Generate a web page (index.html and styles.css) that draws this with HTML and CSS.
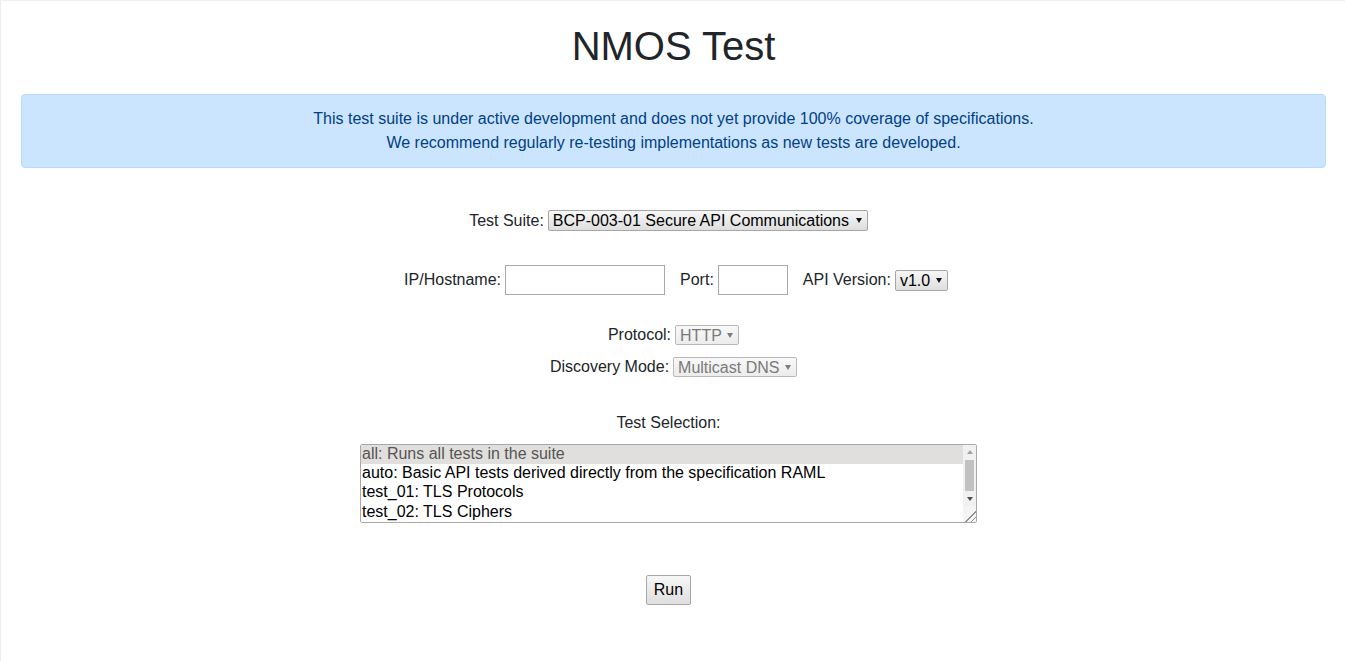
FILE: index.html
```html
<!DOCTYPE html>
<html lang="en">
<head>
<meta charset="utf-8">
<title>NMOS Test</title>
<link rel="stylesheet" href="styles.css">
</head>
<body>
<div class="page">
  <h1 class="title">NMOS Test</h1>
  <div class="alert">
    This test suite is under active development and does not yet provide 100% coverage of specifications.<br>
    We recommend regularly re-testing implementations as new tests are developed.
  </div>
  <form class="form">
    <div class="row row-suite">
      <label class="lbl" for="suite">Test Suite:</label>
      <span class="sel-wrap">
        <select id="suite" class="sel">
          <option>BCP-003-01 Secure API Communications</option>
        </select>
      </span>
    </div>
    <div class="row row-host">
      <label class="lbl" for="host">IP/Hostname:</label>
      <input id="host" class="txt txt-host" type="text">
      <label class="lbl grp" for="port">Port:</label>
      <input id="port" class="txt txt-port" type="text">
      <label class="lbl grp" for="ver">API Version:</label>
      <span class="sel-wrap">
        <select id="ver" class="sel">
          <option>v1.0</option>
        </select>
      </span>
    </div>
    <div class="row row-proto">
      <label class="lbl" for="proto">Protocol:</label>
      <span class="sel-wrap disabled">
        <select id="proto" class="sel" disabled>
          <option>HTTP</option>
        </select>
      </span>
    </div>
    <div class="row row-disc">
      <label class="lbl" for="disc">Discovery Mode:</label>
      <span class="sel-wrap disabled">
        <select id="disc" class="sel" disabled>
          <option>Multicast DNS</option>
        </select>
      </span>
    </div>
    <div class="row row-sel-label">
      <label class="lbl" for="tests">Test Selection:</label>
    </div>
    <div class="row row-list">
      <span class="list-wrap">
        <select id="tests" class="list" multiple size="4">
          <option selected>all: Runs all tests in the suite</option>
          <option>auto: Basic API tests derived directly from the specification RAML</option>
          <option>test_01: TLS Protocols</option>
          <option>test_02: TLS Ciphers</option>
          <option>test_03: HSTS Header</option>
        </select>
        <span class="vscroll" aria-hidden="true">
          <span class="sb-btn sb-up"></span>
          <span class="sb-track"><span class="sb-thumb"></span></span>
          <span class="sb-btn sb-down"></span>
          <span class="sb-corner"></span>
        </span>
      </span>
    </div>
    <div class="row row-run">
      <button type="button" class="btn">Run</button>
    </div>
  </form>
</div>
</body>
</html>
```
FILE: styles.css
```css
html, body {
  margin: 0;
  padding: 0;
  background: #fff;
}
body {
  font-family: "Liberation Sans", Arial, sans-serif;
  font-size: 16px;
  color: #212529;
}
.page {
  border-top: 1px solid #eeeeee;
  border-left: 1px solid #eeeeee;
  min-height: 661px;
  padding: 0 19px 0 20px;
  box-sizing: border-box;
}
.title {
  font-family: "Liberation Sans", Arial, sans-serif;
  font-weight: 400;
  font-size: 40px;
  line-height: 48px;
  text-align: center;
  margin: 21px 0 24px 0;
  color: #212529;
}
.alert {
  background: #cce5ff;
  border: 1px solid #b8daff;
  color: #004085;
  border-radius: 4px;
  padding: 12px 20px;
  line-height: 24px;
  text-align: center;
}
.form {
  margin: 0;
}
.row {
  display: flex;
  justify-content: center;
  align-items: center;
}
.lbl {
  margin-right: 4px;
  line-height: 18px;
}
.grp {
  margin-left: 15px;
}
.row-suite { margin-top: 42px; padding-right: 10px; }
.row-host { margin-top: 34px; padding-left: 5px; }
.row-proto { margin-top: 30px; }
.row-disc { margin-top: 12px; }
.row-sel-label { margin-top: 37px; padding-right: 10px; }
.row-sel-label .lbl { margin-right: 0; }
.row-list { margin-top: 12px; padding-right: 10px; }
.row-run { margin-top: 52px; padding-right: 10px; }

.sel-wrap {
  position: relative;
  display: inline-block;
}
.sel {
  -webkit-appearance: none;
  appearance: none;
  font-family: "Liberation Sans", Arial, sans-serif;
  font-size: 16px;
  color: #000;
  height: 21px;
  line-height: 19px;
  padding: 0 16px 0 4px;
  border: 1px solid #a6a6a6;
  border-radius: 2px;
  background: linear-gradient(#f7f7f7, #dedede);
  margin: 0;
  display: block;
  opacity: 1;
}
.sel-wrap::after {
  content: "";
  position: absolute;
  right: 6px;
  top: 8px;
  width: 0;
  height: 0;
  border-left: 3px solid transparent;
  border-right: 3px solid transparent;
  border-top: 5px solid #111;
  pointer-events: none;
}
.sel-wrap.disabled .sel {
  color: #7a7a7a;
  border-color: #b9b9b9;
  background: linear-gradient(#f8f8f8, #ececec);
  height: 20px;
  opacity: 1;
}
.sel-wrap.disabled::after {
  border-top-color: #7a7a7a;
  top: 8px;
}
.txt {
  box-sizing: border-box;
  height: 30px;
  border: 1px solid #a9a9a9;
  margin: 0;
  padding: 2px 4px;
  font-family: "Liberation Sans", Arial, sans-serif;
  font-size: 16px;
  background: #fff;
}
.txt-host { width: 160px; }
.txt-port { width: 70px; }

.list-wrap {
  position: relative;
  display: inline-block;
}
.list {
  box-sizing: border-box;
  display: block;
  width: 617px;
  height: 79px;
  border: 1px solid #a9a9a9;
  font-family: "Liberation Sans", Arial, sans-serif;
  font-size: 16px;
  line-height: 19px;
  color: #000;
  margin: 0;
  padding: 0;
  resize: both;
  background: #fff;
}
.list option {
  padding: 0 2px 0 1px;
  line-height: 19px;
  height: 19px;
}
.list option:checked {
  background: #e0dfdd;
  color: #555;
  margin-right: 13px;
}
.vscroll {
  position: absolute;
  top: 1px;
  right: 1px;
  bottom: 1px;
  width: 13px;
  background: #f1f1f1;
  display: flex;
  flex-direction: column;
  pointer-events: none;
}
.sb-btn {
  height: 14px;
  flex: none;
  display: flex;
  align-items: center;
  justify-content: center;
}
.sb-up::before {
  content: "";
  border-left: 3px solid transparent;
  border-right: 3px solid transparent;
  border-bottom: 4px solid #a3a3a3;
}
.sb-down::before {
  content: "";
  border-left: 3px solid transparent;
  border-right: 3px solid transparent;
  border-top: 4px solid #505050;
}
.sb-track {
  flex: 1;
  padding: 1px 2px;
  display: flex;
}
.sb-thumb {
  flex: 1;
  background: #c1c1c1;
}
.sb-corner {
  height: 16px;
  flex: none;
  background:
    linear-gradient(135deg, transparent 0 62%, #8f8f8f 62% 68%, transparent 68% 80%, #8f8f8f 80% 86%, transparent 86%),
    #f4f4f4;
}
.btn {
  font-family: "Liberation Sans", Arial, sans-serif;
  font-size: 16px;
  color: #000;
  height: 30px;
  width: 45px;
  padding: 0;
  border: 1px solid #a6a6a6;
  border-radius: 2px;
  background: linear-gradient(#f7f7f7, #dedede);
}
```
